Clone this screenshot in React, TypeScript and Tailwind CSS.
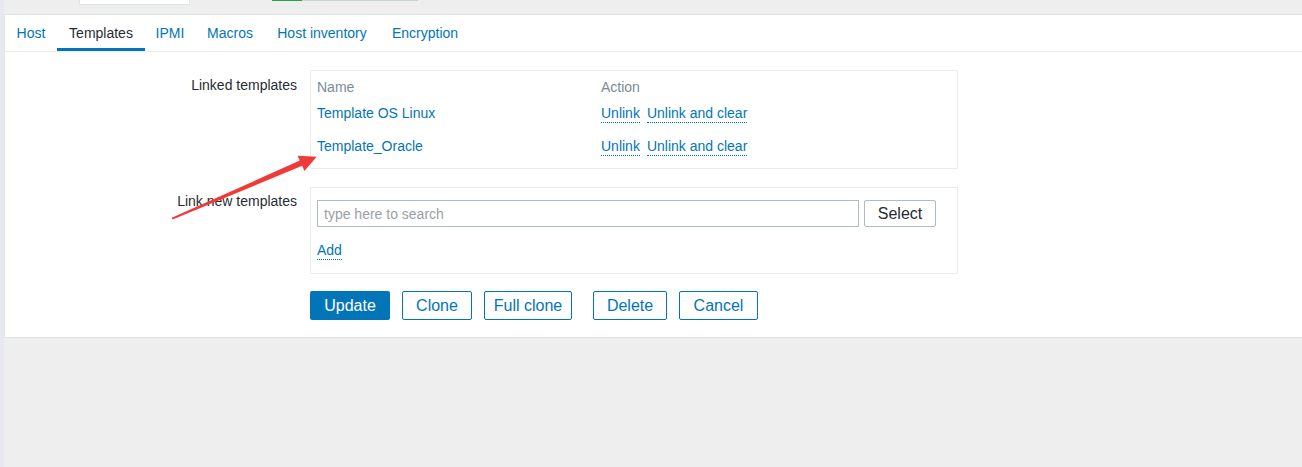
import React from 'react';

const tabs: { label: string; w: string }[] = [
  { label: 'Host', w: 'w-[52px]' },
  { label: 'Templates', w: 'w-[88px]' },
  { label: 'IPMI', w: 'w-[50px]' },
  { label: 'Macros', w: 'w-[70px]' },
  { label: 'Host inventory', w: 'w-[114px]' },
  { label: 'Encryption', w: 'w-[92px]' },
];

const linked = ['Template OS Linux', 'Template_Oracle'];

const DottedLink: React.FC<{ children: React.ReactNode }> = ({ children }) => (
  <a className="text-[#0275b8] border-b border-dotted border-[#0275b8] leading-[17px] cursor-pointer">{children}</a>
);

const App: React.FC = () => {
  return (
    <div
      className="relative flex h-[467px] w-[1302px] overflow-hidden bg-[#eeeeee] text-[14px] text-[#1f2c33]"
      style={{ fontFamily: '"Liberation Sans", Arial, sans-serif' }}
    >
      <div className="w-[4px] shrink-0 bg-[#e8e9ef]" />
      <div className="flex flex-1 flex-col">
        {/* top strip */}
        <div className="relative h-[14px] shrink-0">
          <div className="absolute left-[75px] top-0 h-[5px] w-[111px] rounded-b-[2px] border-x border-b border-[#dfe4e7] bg-white" />
          <div className="absolute left-[268px] top-0 flex h-[1px]">
            <div className="w-[30px] bg-[#2f9f4f]" />
            <div className="w-[116px] bg-[#c9d3d6]" />
          </div>
        </div>

        {/* panel */}
        <div className="h-[324px] border-y border-l border-[#dfe4e7] bg-white">
          <div className="flex h-[37px] border-b border-[#ebeef0]">
            {tabs.map((t) => (
              <div
                key={t.label}
                className={`flex items-center justify-center ${t.w} ${
                  t.label === 'Templates'
                    ? 'border-b-[3px] border-[#0275b8] pt-[3px] text-[#1f2c33]'
                    : 'text-[#0275b8]'
                }`}
              >
                {t.label}
              </div>
            ))}
          </div>

          <div className="flex flex-col pt-[18px]">
            {/* Linked templates */}
            <div className="flex">
              <div className="w-[292px] shrink-0 pt-[6px] text-right leading-[18px]">Linked templates</div>
              <div className="ml-[13px] w-[648px] border border-[#ebebeb] px-[6px] pt-[6px] pb-[5px]">
                <div className="flex h-[20px] items-center text-[#768d99]">
                  <div className="w-[284px]">Name</div>
                  <div>Action</div>
                </div>
                {linked.map((n) => (
                  <div key={n} className="flex h-[33px] items-center">
                    <div className="w-[284px] text-[#0275b8]">{n}</div>
                    <div className="flex gap-[7px]">
                      <DottedLink>Unlink</DottedLink>
                      <DottedLink>Unlink and clear</DottedLink>
                    </div>
                  </div>
                ))}
              </div>
            </div>

            {/* Link new templates */}
            <div className="mt-[18px] flex">
              <div className="w-[292px] shrink-0 pt-[5px] text-right leading-[18px]">Link new templates</div>
              <div className="ml-[13px] w-[648px] border border-[#ebebeb] px-[6px] pt-[12px] pb-[13px]">
                <div className="flex gap-[5px]">
                  <input
                    placeholder="type here to search"
                    className="h-[27px] w-[542px] border border-[#acbbc7] px-[6px] text-[14px] text-[#1f2c33] outline-none placeholder:text-[#9aa0a6]"
                    style={{ fontFamily: '"Liberation Sans", Arial, sans-serif' }}
                  />
                  <button className="h-[27px] w-[72px] rounded-[2px] border border-[#acbbc7] bg-white text-[16px] text-[#1f2c33]">
                    Select
                  </button>
                </div>
                <div className="mt-[15px] flex">
                  <DottedLink>Add</DottedLink>
                </div>
              </div>
            </div>

            {/* buttons */}
            <div className="ml-[305px] mt-[17px] flex text-[16px]">
              <button className="h-[29px] w-[80px] rounded-[2px] bg-[#0275b8] text-white">Update</button>
              <button className="ml-[12px] h-[29px] w-[70px] rounded-[2px] border border-[#0275b8] bg-white text-[#0275b8]">Clone</button>
              <button className="ml-[12px] h-[29px] w-[88px] rounded-[2px] border border-[#0275b8] bg-white text-[#0275b8]">Full clone</button>
              <button className="ml-[21px] h-[29px] w-[74px] rounded-[2px] border border-[#0275b8] bg-white text-[#0275b8]">Delete</button>
              <button className="ml-[12px] h-[29px] w-[79px] rounded-[2px] border border-[#0275b8] bg-white text-[#0275b8]">Cancel</button>
            </div>
          </div>
        </div>
      </div>

      {/* annotation arrow */}
      <svg className="pointer-events-none absolute left-0 top-0" width="1302" height="467" viewBox="0 0 1302 467">
        <polygon
          points="171.8,217.8 299.8,160.6 297.6,155.8 316.7,156.7 304.4,170.9 302.2,165.8 172.6,219.4"
          fill="#f03a3a"
        />
      </svg>
    </div>
  );
};

export default App;
